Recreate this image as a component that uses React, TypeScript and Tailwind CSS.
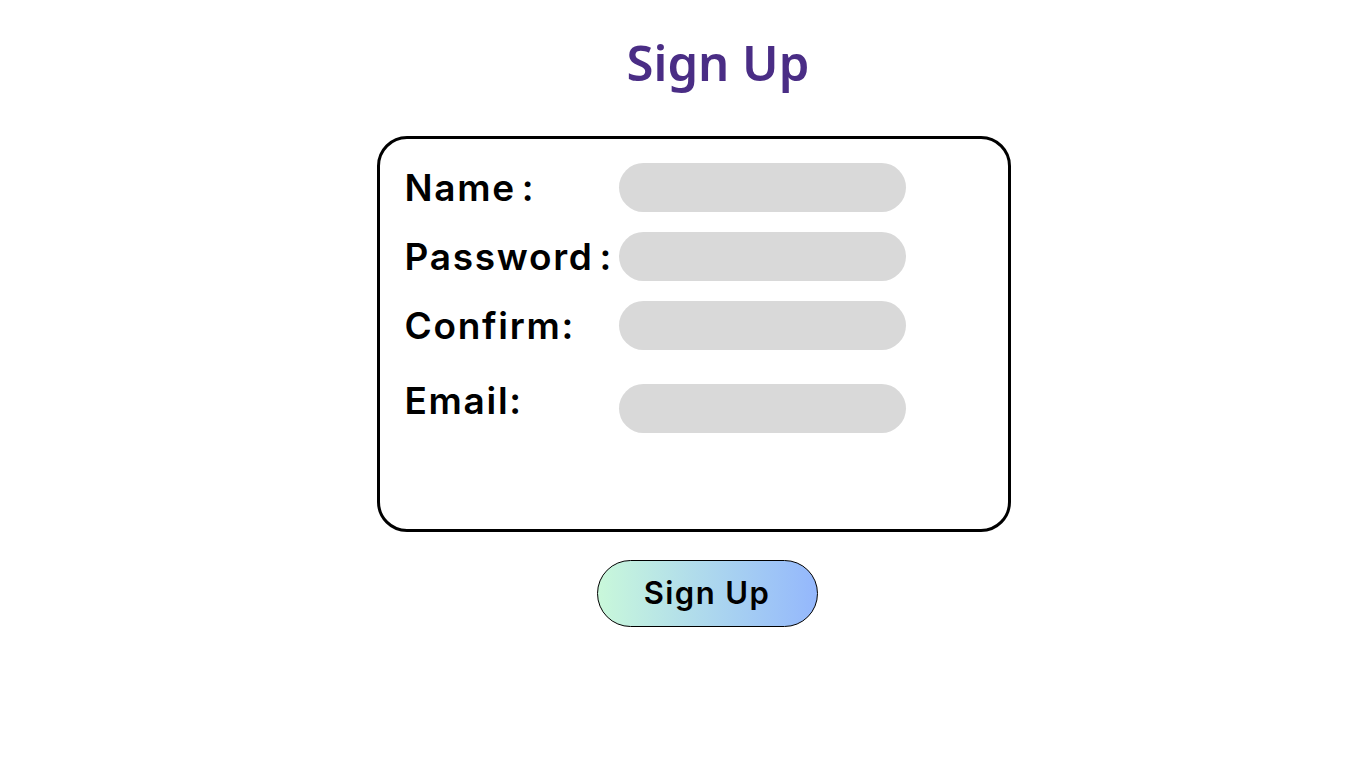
import React from "react";

const fields = [
  { name: "Name", colon: " :", gap: "mt-0" },
  { name: "Password", colon: " :", gap: "mt-5" },
  { name: "Confirm", colon: ":", gap: "mt-5" },
  { name: "Email", colon: ":", gap: "mt-[34px]" },
];

export default function App() {
  return (
    <div className="min-h-[768px] w-full bg-white flex flex-col items-center font-['Inter',sans-serif]">
      <h1 className="mt-[30px] ml-[70px] text-[49px] leading-[64px] font-semibold text-[#4a2d85] font-['Noto_Sans',sans-serif]">
        Sign Up
      </h1>

      <div className="mt-[42px] ml-[21px] w-[634px] h-[396px] border-[3px] border-black rounded-[30px] pt-6 pl-[25px]">
        {fields.map((f, i) => (
          <div key={i} className={`flex items-start ${f.gap}`}>
            <div
              className={`w-[214px] shrink-0 whitespace-nowrap text-[37px] font-semibold text-black tracking-[1.7px] ${
                i === 3 ? "leading-[34px]" : "leading-[49px]"
              }`}
            >
              {f.name}
              {f.colon === " :" ? <span className="ml-[6px]">:</span> : ":"}
            </div>
            <div className="w-[287px] h-[49px] rounded-full bg-[#d9d9d9]" />
          </div>
        ))}
      </div>

      <button className="mt-[28px] ml-[48px] w-[221px] h-[67px] rounded-full border border-black bg-gradient-to-r from-[#c9f8da] to-[#94b7fc] text-[31px] font-semibold text-black tracking-[1.4px]">
        Sign Up
      </button>
    </div>
  );
}
